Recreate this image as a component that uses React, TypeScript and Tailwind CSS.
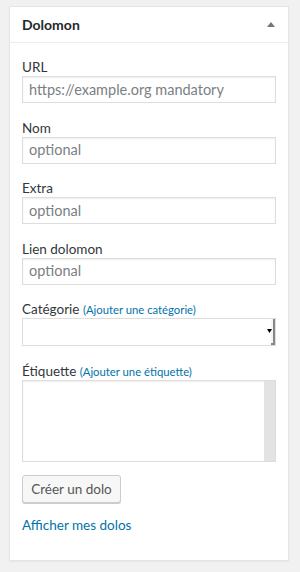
import React from "react";

const font = { fontFamily: 'Lato, "Noto Sans", sans-serif' };

function Field({ label, placeholder }: { label: string; placeholder: string }) {
  return (
    <div className="mb-[15.6px]">
      <div className="h-[18px] text-[13.5px] leading-[18px] text-[#32373c]">{label}</div>
      <div className="h-[27px] border border-[#ddd] bg-white shadow-[inset_0_1px_2px_rgba(0,0,0,0.07)] flex items-center px-[6px] text-[14.5px] text-[#7a7f84]">
        {placeholder}
      </div>
    </div>
  );
}

export default function App() {
  return (
    <div className="w-[300px] min-h-[572px] bg-[#f1f1f1] pt-[6px] pl-[9px]" style={font}>
      <div className="w-[280px] h-[555px] border border-[#e5e5e5] bg-white shadow-[0_1px_1px_rgba(0,0,0,0.04)]">
        <div className="h-[36px] border-b border-[#eee] flex items-center justify-between pl-[12px] pr-[13px]">
          <span className="text-[14px] font-bold text-[#23282d]">Dolomon</span>
          <svg width="8" height="5" viewBox="0 0 8 5">
            <path d="M4 0 L8 5 L0 5 Z" fill="#72777c" />
          </svg>
        </div>
        <div className="px-[12px] pt-[15px]">
          <Field label="URL" placeholder="https://example.org mandatory" />
          <Field label="Nom" placeholder="optional" />
          <Field label="Extra" placeholder="optional" />
          <Field label="Lien dolomon" placeholder="optional" />
          <div className="mb-[15.6px]">
            <div className="h-[18px] text-[13.5px] leading-[18px] text-[#32373c]">
              Catégorie <span className="text-[#0073aa] text-[11.3px]">(Ajouter une catégorie)</span>
            </div>
            <div className="h-[28px] border border-[#ddd] bg-white flex justify-end">
              <div className="w-[4px] h-full border-r-[2px] border-b-[2px] border-[#888] bg-[#f4f4f4] relative">
                <svg className="absolute right-[1px] top-[10px]" width="5" height="4" viewBox="0 0 5 4">
                  <path d="M0 0 L5 0 L2.5 4 Z" fill="#000" />
                </svg>
              </div>
            </div>
          </div>
          <div>
            <div className="h-[18px] text-[13.5px] leading-[18px] text-[#32373c]">
              Étiquette <span className="text-[#0073aa] text-[11.3px]">(Ajouter une étiquette)</span>
            </div>
            <div className="h-[82px] border border-[#ddd] bg-white shadow-[inset_0_1px_2px_rgba(0,0,0,0.07)] flex justify-end">
              <div className="w-[11px] h-full bg-[#e3e3e3]" />
            </div>
          </div>
          <div className="mt-[13px]">
            <button className="h-[28px] w-[99px] rounded-[3px] border border-[#ccc] bg-[#f7f7f7] shadow-[0_1px_0_#ccc] text-[13.5px] text-[#555]">
              Créer un dolo
            </button>
          </div>
          <div className="mt-[13px] text-[13.5px] leading-[18px] text-[#0073aa]">Afficher mes dolos</div>
        </div>
      </div>
    </div>
  );
}
